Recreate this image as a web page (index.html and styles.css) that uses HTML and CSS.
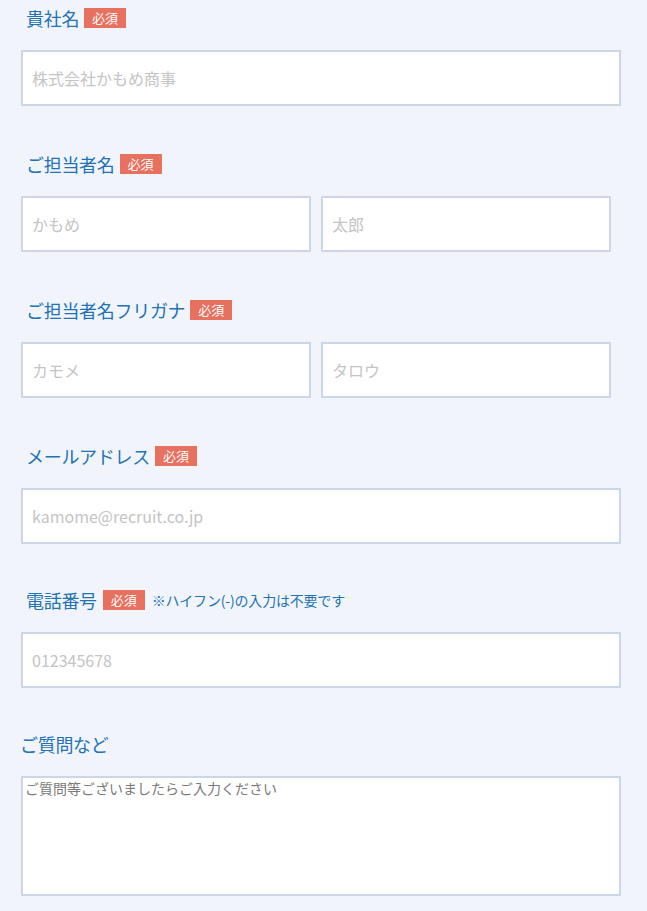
FILE: index.html
```html
<!DOCTYPE html>
<html lang="ja">
<head>
<meta charset="utf-8">
<link rel="stylesheet" href="styles.css">
</head>
<body>
<form class="form">
  <div class="field">
    <div class="label"><span class="label-text">貴社名</span><span class="badge">必須</span></div>
    <input class="input full" type="text" placeholder="株式会社かもめ商事">
  </div>
  <div class="field">
    <div class="label"><span class="label-text">ご担当者名</span><span class="badge">必須</span></div>
    <div class="pair">
      <input class="input half" type="text" placeholder="かもめ">
      <input class="input half" type="text" placeholder="太郎">
    </div>
  </div>
  <div class="field">
    <div class="label"><span class="label-text">ご担当者名フリガナ</span><span class="badge">必須</span></div>
    <div class="pair">
      <input class="input half" type="text" placeholder="カモメ">
      <input class="input half" type="text" placeholder="タロウ">
    </div>
  </div>
  <div class="field tight">
    <div class="label"><span class="label-text">メールアドレス</span><span class="badge">必須</span></div>
    <input class="input full" type="text" placeholder="kamome@recruit.co.jp">
  </div>
  <div class="field snug">
    <div class="label"><span class="label-text">電話番号</span><span class="badge wide">必須</span><span class="note">※ハイフン(-)の入力は不要です</span></div>
    <input class="input full" type="text" placeholder="012345678">
  </div>
  <div class="field last">
    <div class="label plain"><span class="label-text">ご質問など</span></div>
    <textarea class="textarea" placeholder="ご質問等ございましたらご入力ください"></textarea>
  </div>
</form>
</body>
</html>
```
FILE: styles.css
```css
html, body {
  margin: 0;
  padding: 0;
  background: #f1f5fb;
}
body {
  font-family: "Noto Sans CJK JP", "Noto Sans", sans-serif;
  width: 647px;
  height: 911px;
  overflow: hidden;
}
.form {
  padding: 8px 0 0 21px;
}
.field {
  display: flex;
  flex-direction: column;
  margin-bottom: 48px;
}
.field.tight {
  margin-bottom: 46px;
}
.field.snug {
  margin-bottom: 46px;
}
.label {
  display: flex;
  align-items: center;
  height: 20px;
  padding-left: 5px;
  margin-bottom: 22px;
  color: #2272b4;
}
.label.plain {
  padding-left: 0;
  margin-left: -1px;
}
.label-text {
  font-size: 18px;
  line-height: 20px;
  letter-spacing: -0.3px;
}
.badge {
  display: inline-flex;
  align-items: center;
  justify-content: center;
  width: 42px;
  height: 20px;
  margin-left: 5px;
  background: #e8705f;
  color: #fff;
  font-size: 13px;
  line-height: 20px;
}
.badge.wide {
  margin-left: 6px;
}
.note {
  margin-left: 7px;
  font-size: 14px;
  color: #2272b4;
  letter-spacing: -0.2px;
}
.input {
  box-sizing: border-box;
  height: 56px;
  border: 2px solid #cdd6e6;
  background: #fff;
  padding: 0 9px;
  font-family: inherit;
  font-size: 16px;
  color: #333;
  outline: none;
  margin: 0;
}
.input::placeholder {
  color: #c4c4c4;
}
.full {
  width: 600px;
}
.pair {
  display: flex;
  gap: 10px;
}
.half {
  width: 290px;
}
.textarea {
  box-sizing: border-box;
  width: 600px;
  height: 120px;
  border: 2px solid #cdd6e6;
  background: #fff;
  padding: 1px 2px;
  font-family: inherit;
  font-size: 14px;
  line-height: 18px;
  resize: none;
  outline: none;
  margin: 0;
}
.textarea::placeholder {
  color: #7a7a7a;
}
```
